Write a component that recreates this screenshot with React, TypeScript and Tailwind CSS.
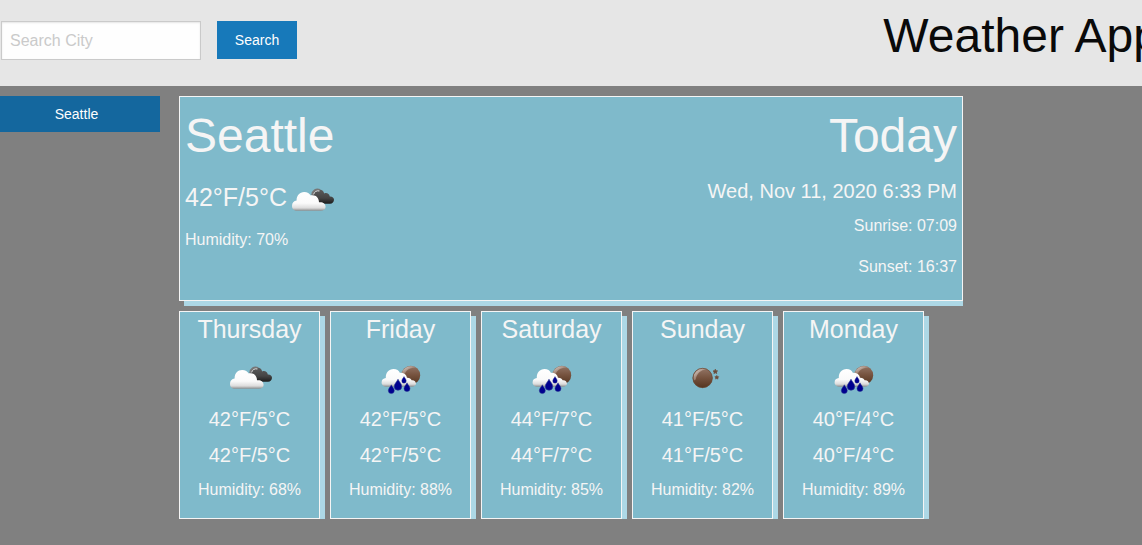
import React from "react";

type IconKind = "clouds" | "rain" | "clear";

interface Forecast {
  day: string;
  icon: IconKind;
  high: string;
  low: string;
  humidity: number;
}

const forecasts: Forecast[] = [
  { day: "Thursday", icon: "clouds", high: "42°F/5°C", low: "42°F/5°C", humidity: 68 },
  { day: "Friday", icon: "rain", high: "42°F/5°C", low: "42°F/5°C", humidity: 88 },
  { day: "Saturday", icon: "rain", high: "44°F/7°C", low: "44°F/7°C", humidity: 85 },
  { day: "Sunday", icon: "clear", high: "41°F/5°C", low: "41°F/5°C", humidity: 82 },
  { day: "Monday", icon: "rain", high: "40°F/4°C", low: "40°F/4°C", humidity: 89 },
];

function IconGradients() {
  return (
    <svg className="absolute h-0 w-0" aria-hidden="true">
      <defs>
        <linearGradient id="cloud-light" x1="0" y1="0" x2="0" y2="1">
          <stop offset="0" stopColor="#ffffff" />
          <stop offset="0.6" stopColor="#fafafa" />
          <stop offset="0.85" stopColor="#dcdcdc" />
          <stop offset="1" stopColor="#8c8c8c" />
        </linearGradient>
        <linearGradient id="cloud-dark" x1="0" y1="0" x2="0" y2="1">
          <stop offset="0" stopColor="#5c5c5c" />
          <stop offset="0.6" stopColor="#444444" />
          <stop offset="1" stopColor="#1c1c1c" />
        </linearGradient>
        <linearGradient id="moon" x1="0" y1="0" x2="0" y2="1">
          <stop offset="0" stopColor="#937566" />
          <stop offset="0.5" stopColor="#75523e" />
          <stop offset="1" stopColor="#54341f" />
        </linearGradient>
        <linearGradient id="moon-shine" x1="0" y1="0" x2="1" y2="1">
          <stop offset="0" stopColor="#f2ece8" />
          <stop offset="0.5" stopColor="#b39c8f" stopOpacity="0.6" />
          <stop offset="1" stopColor="#6f4c35" stopOpacity="0" />
        </linearGradient>
      </defs>
    </svg>
  );
}

function Drop({ x, y, s }: { x: number; y: number; s: number }) {
  return (
    <path
      transform={`translate(${x} ${y}) scale(${s})`}
      d="M0-4.6C.8-2.6 3-1 3 1.2A3 3 0 0 1-3 1.2C-3-1-.8-2.6 0-4.6Z"
      fill="#00008f"
      stroke="#2a3890"
      strokeWidth="0.5"
    />
  );
}

function WeatherIcon({ kind, className = "" }: { kind: IconKind; className?: string }) {
  return (
    <svg viewBox="0 0 50 50" className={`h-[50px] w-[50px] shrink-0 ${className}`} role="img" aria-label={kind}>
      {kind === "clouds" && (
        <>
          <path
            d="M25 20C25 15 28 12 32 12.6C34.8 12.6 36.6 14.2 37.2 16.4C39.8 15.4 42.4 16.8 42.8 19.4C45.2 19.2 47 20.6 47 22.8C47 25 45.4 26.8 43 26.8H29Z"
            fill="url(#cloud-dark)"
          />
          <path d="M25.2 18C25.6 13.8 29 11.6 32.8 13" fill="none" stroke="#777" strokeWidth="2" />
          <path d="M26.6 17.4C27.2 14.8 29.8 13.2 32.4 14" fill="none" stroke="#eee" strokeWidth="0.9" />
          <path
            d="M10 33.8C7 33.8 5 31.8 5 28.9C5 26 6.8 24 9.6 23.6C9.4 18.4 12.6 14.9 17.2 14.9C20.4 14.9 22.6 16.3 23.8 18.6C27.8 17.2 32 20.2 32 25.3C35.8 24.7 38.6 26.8 38.6 29.8C38.6 32.2 36.6 33.8 33.8 33.8Z"
            fill="url(#cloud-light)"
          />
        </>
      )}
      {kind === "rain" && (
        <>
          <circle cx="34.8" cy="20.2" r="9.4" fill="url(#moon)" />
          <path d="M25.6 19A9.4 9.4 0 0 1 40 12.8C35 12.2 29.8 14.6 28.6 20Z" fill="url(#moon-shine)" />
          <path
            d="M11 31.8C8 31.8 5.6 30 5.6 27.4C5.6 24.6 7.4 23.2 9.8 23C9.6 17.6 12.8 14 17.6 14C20.8 14 22.8 15.6 24 18C27.6 17.2 30.4 19.6 31 22.8C33.2 22.6 35 23.6 35.6 25.2C38.2 24.8 40 26.6 40 28.6C40 30.6 38.4 31.8 36 31.8Z"
            fill="url(#cloud-light)"
          />
          <Drop x={15.3} y={34.4} s={1} />
          <Drop x={22} y={30} s={1.25} />
          <Drop x={28} y={25} s={0.75} />
          <Drop x={31} y={32.4} s={1} />
        </>
      )}
      {kind === "clear" && (
        <>
          <circle cx="24.6" cy="23" r="10" fill="url(#moon)" />
          <path
            d="M16 25.5A9 9 0 0 1 28.4 14.6C23 15 18.6 18.5 17.8 24.5Z"
            fill="url(#moon-shine)"
          />
          <circle cx="24.6" cy="23" r="9.7" fill="none" stroke="#6a4a38" strokeWidth="0.7" />
          <path d="M37.3 14.2L38 15.7L39.6 15.9L38.4 17L38.7 18.6L37.3 17.8L35.9 18.6L36.2 17L35 15.9L36.6 15.7Z" fill="#6b4a38" stroke="#6b4a38" strokeWidth="0.7" />
          <path d="M38.8 20.4L39.4 21.6L40.8 21.8L39.8 22.8L40 24.1L38.8 23.5L37.6 24.1L37.8 22.8L36.8 21.8L38.2 21.6Z" fill="#6b4a38" stroke="#6b4a38" strokeWidth="0.6" />
        </>
      )}
    </svg>
  );
}

function ForecastCard({ day, icon, high, low, humidity }: Forecast) {
  return (
    <article className="flex w-[141px] flex-col items-center border border-[#f5f5f5] bg-[#7fbacb] pb-[15px] shadow-[5px_5px_0_0_#add8e6]">
      <h4 className="mb-2 text-[25px] leading-[35px]">{day}</h4>
      <WeatherIcon kind={icon} />
      <h5 className="mb-2 text-xl leading-7">{high}</h5>
      <h5 className="mb-2 text-xl leading-7">{low}</h5>
      <p className="text-base leading-[26px]">Humidity: {humidity}%</p>
    </article>
  );
}

export default function App() {
  return (
    <div className="min-h-screen overflow-hidden bg-[#808080] font-['Liberation_Sans',Arial,sans-serif] text-[#f5f5f5]">
      <IconGradients />
      <header className="flex h-[86px] items-start justify-between bg-[#e6e6e6]">
        <form className="flex items-start gap-4 pt-[21px] pl-px" onSubmit={(e) => e.preventDefault()}>
          <input
            type="text"
            aria-label="Search City"
            placeholder="Search City"
            className="h-[39px] w-[200px] border border-[#cacaca] bg-[#fefefe] px-2 text-base text-[#0a0a0a] shadow-[inset_0_1px_2px_rgba(10,10,10,0.1)] placeholder:text-[#cacaca]"
          />
          <button type="submit" className="h-[38px] w-20 bg-[#1779ba] text-sm text-[#fefefe]">
            Search
          </button>
        </form>
        <h1 className="-mr-[18px] pt-[2px] text-5xl leading-[67px] whitespace-nowrap text-[#0a0a0a]">Weather App</h1>
      </header>

      <div className="grid grid-cols-[160px_minmax(0,1fr)_160px] gap-x-[19px] pt-2.5">
        <nav aria-label="Recent cities">
          <button type="button" className="h-9 w-full bg-[#14679e] pr-[7px] text-sm text-[#fefefe]">
            Seattle
          </button>
        </nav>

        <main>
          <div className="overflow-hidden pb-[5px]">
            <section className="flex justify-between border border-[#f5f5f5] bg-[#7fbacb] p-[5px] shadow-[5px_5px_0_0_#add8e6]">
              <div>
                <h1 className="mb-2 text-5xl leading-[67px]">Seattle</h1>
                <div className="mb-2 flex h-[42px] items-start">
                  <h4 className="text-[25px] leading-10">42°F/5°C</h4>
                  <WeatherIcon kind="clouds" />
                </div>
                <p className="text-base leading-[26px]">Humidity: 70%</p>
              </div>
              <div className="text-right">
                <h1 className="mb-2 text-5xl leading-[67px]">Today</h1>
                <h5 className="mb-2 text-xl leading-7">Wed, Nov 11, 2020 6:33 PM</h5>
                <p className="mb-[15px] text-base leading-[26px]">Sunrise: 07:09</p>
                <p className="mb-[15px] text-base leading-[26px]">Sunset: 16:37</p>
              </div>
            </section>
          </div>

          <div className="mt-[5px] flex flex-wrap gap-2.5 overflow-hidden">
            {forecasts.map((f) => (
              <ForecastCard key={f.day} {...f} />
            ))}
          </div>
        </main>
      </div>
    </div>
  );
}
